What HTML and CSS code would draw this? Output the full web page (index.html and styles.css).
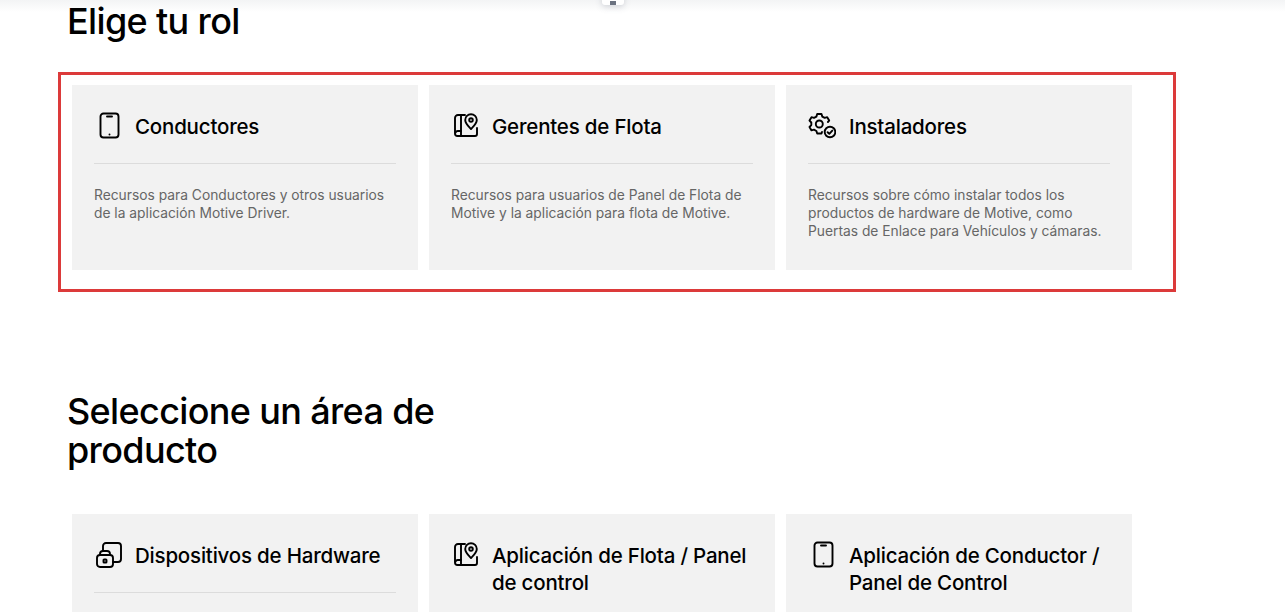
FILE: index.html
```html
<!DOCTYPE html>
<html lang="es">
<head>
<meta charset="utf-8">
<title>Elige tu rol</title>
<link rel="stylesheet" href="styles.css">
</head>
<body>
<div class="topshade"></div>
<div class="handle"><span class="handle-mark"></span></div>
<main class="page">
  <h1 class="heading">Elige tu rol</h1>
  <section class="highlight">
    <div class="grid">
      <a class="card">
        <div class="card-head">
          <svg class="icon" viewBox="0 0 28 28" fill="none" stroke="#000" stroke-width="1.9" stroke-linecap="round" stroke-linejoin="round"><rect x="6.500" y="2.500" width="18" height="24" rx="3"/><path d="M13 5.500h5"/><path d="M15.500 23.500h.01"/></svg>
          <h2 class="card-title">Conductores</h2>
        </div>
        <p class="card-text">Recursos para Conductores y otros usuarios de la aplicación Motive Driver.</p>
      </a>
      <a class="card">
        <div class="card-head">
          <svg class="icon" viewBox="0 0 28 28" fill="none" stroke="#000" stroke-width="1.9" stroke-linecap="round" stroke-linejoin="round"><path d="M14 4H7A3 3 0 0 0 4 7V22.500A2.500 2.500 0 0 0 6.500 25H24a2 2 0 0 0 2-2V17"/><path d="M10 4.200V25"/><path d="M4.500 21.500a2.500 2.500 0 0 1 2.500-1.500h3"/><path d="M20 18c-3-3-5.800-5.500-5.800-9a5.800 5.800 0 0 1 11.600 0c0 3.500-2.800 6-5.800 9z"/><circle cx="20" cy="9" r="1.800"/></svg>
          <h2 class="card-title">Gerentes de Flota</h2>
        </div>
        <p class="card-text">Recursos para usuarios de Panel de Flota de Motive y la aplicación para flota de Motive.</p>
      </a>
      <a class="card">
        <div class="card-head">
          <svg class="icon" viewBox="0 0 28 28" fill="none" stroke="#000" stroke-width="1.9" stroke-linecap="round" stroke-linejoin="round"><path d="M14 21l-.5 1.500H9.200l-.8-2.500-2.400-1.300-2.500.7-2-3.400 1.800-1.900v-2.600L1.500 9.600l2-3.400 2.500.7 2.400-1.300.8-2.600h4.300l.8 2.600 2.400 1.300 2.500-.7 2 3.400-1.300 1.400"/><circle cx="11.300" cy="13" r="3.500"/><circle cx="22" cy="21" r="5.300"/><path d="M19.600 21.200l1.700 1.600 3-3.200"/></svg>
          <h2 class="card-title">Instaladores</h2>
        </div>
        <p class="card-text">Recursos sobre cómo instalar todos los productos de hardware de Motive, como Puertas de Enlace para Vehículos y cámaras.</p>
      </a>
    </div>
  </section>
  <h1 class="heading heading-second">Seleccione un área de producto</h1>
  <section class="plain">
    <div class="grid">
      <a class="card">
        <div class="card-head">
          <svg class="icon" viewBox="0 0 28 28" fill="none" stroke="#000" stroke-width="1.9" stroke-linecap="round" stroke-linejoin="round"><path d="M9 11V6a3 3 0 0 1 3-3h12a3 3 0 0 1 3 3v13a3 3 0 0 1-3 3h-5"/><rect x="3" y="15" width="16" height="12" rx="3"/><path d="M6 15v-1a3 3 0 0 1 3-3h4a3 3 0 0 1 3 3v1"/><rect x="9.500" y="19.500" width="3" height="3" rx=".6"/></svg>
          <h2 class="card-title">Dispositivos de Hardware</h2>
        </div>
      </a>
      <a class="card">
        <div class="card-head">
          <svg class="icon" viewBox="0 0 28 28" fill="none" stroke="#000" stroke-width="1.9" stroke-linecap="round" stroke-linejoin="round"><path d="M14 4H7A3 3 0 0 0 4 7V22.500A2.500 2.500 0 0 0 6.500 25H24a2 2 0 0 0 2-2V17"/><path d="M10 4.200V25"/><path d="M4.500 21.500a2.500 2.500 0 0 1 2.500-1.500h3"/><path d="M20 18c-3-3-5.800-5.500-5.800-9a5.800 5.800 0 0 1 11.600 0c0 3.500-2.800 6-5.800 9z"/><circle cx="20" cy="9" r="1.800"/></svg>
          <h2 class="card-title">Aplicación de Flota / Panel de control</h2>
        </div>
      </a>
      <a class="card">
        <div class="card-head">
          <svg class="icon" viewBox="0 0 28 28" fill="none" stroke="#000" stroke-width="1.9" stroke-linecap="round" stroke-linejoin="round"><rect x="6.500" y="2.500" width="18" height="24" rx="3"/><path d="M13 5.500h5"/><path d="M15.500 23.500h.01"/></svg>
          <h2 class="card-title">Aplicación de Conductor / Panel de Control</h2>
        </div>
      </a>
    </div>
  </section>
</main>
</body>
</html>
```
FILE: styles.css
```css
* { box-sizing: border-box; }
html, body { margin: 0; padding: 0; height: 612px; overflow: hidden; background: #fff; }
body { font-family: Inter, "Liberation Sans", sans-serif; color: #000; position: relative; }
.topshade { position: absolute; top: 0; left: 0; right: 0; height: 12px; background: linear-gradient(#f3f4f5, #fff); }
.handle { position: absolute; top: -6px; left: 602px; width: 22px; height: 11px; background: #fff; border-radius: 3px; box-shadow: 0 2px 6px rgba(90,100,120,.25); display: flex; justify-content: center; align-items: flex-end; }
.handle-mark { width: 6px; height: 4px; background: #6b7280; }
.page { position: relative; padding-top: 1px; }
.heading { margin: 0 0 0 67px; width: 400px; font-size: 36px; line-height: 40px; font-weight: 550; letter-spacing: -0.65px; }
.highlight { margin: 31px 0 0 58px; width: 1118px; height: 220px; border: 3px solid #dc3a3a; padding: 10px 11px; }
.plain { margin: 42px 0 0 72px; }
.heading-second { margin-top: 100px; height: 80px; line-height: 39px; }
.grid { display: flex; gap: 11px; }
.card { display: block; width: 346px; height: 185px; background: #f2f2f2; padding: 22px; flex: none; }
.card-head { display: flex; gap: 13px; align-items: flex-start; padding-bottom: 22px; border-bottom: 1px solid #dcdcdc; min-height: 57px; }
.icon { width: 28px; height: 28px; flex: none; margin-top: 4px; }
.card-title { margin: 6px 0 0; font-size: 20.5px; line-height: 27px; font-weight: 500; letter-spacing: -0.2px; }
.card-text { margin: 21.5px 0 0; font-size: 13.8px; line-height: 18px; color: #666; }
```
